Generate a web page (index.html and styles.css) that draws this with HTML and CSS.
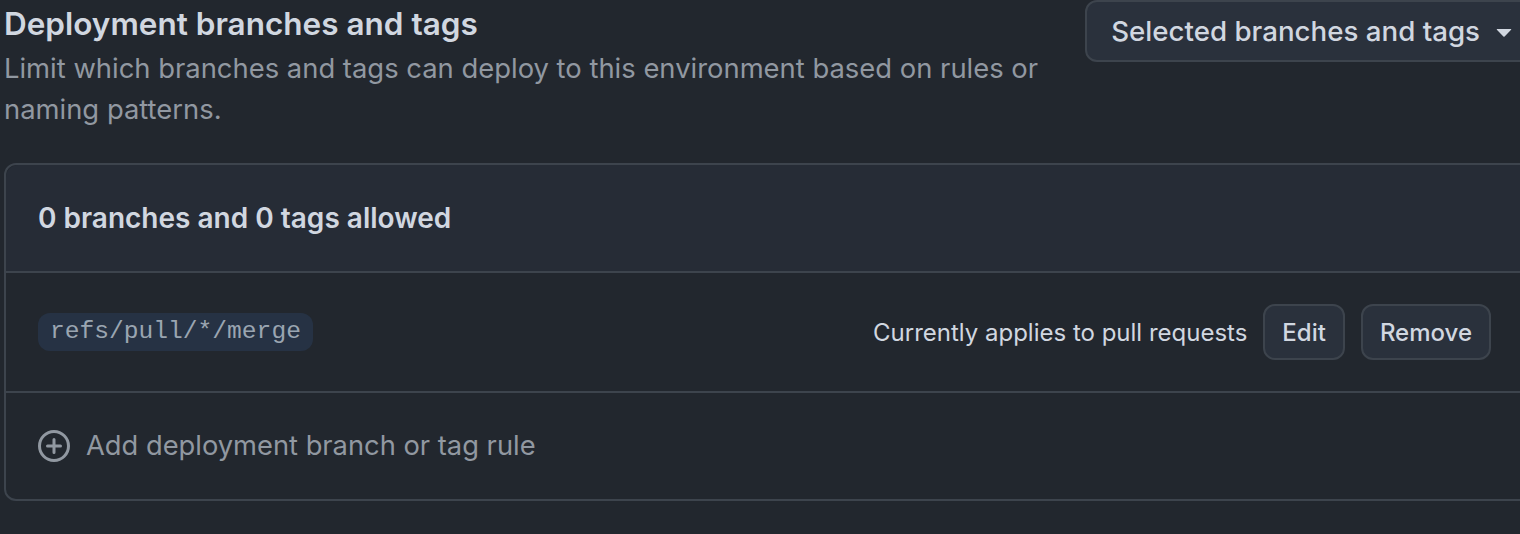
FILE: index.html
```html
<!DOCTYPE html>
<html lang="en">
<head>
<meta charset="utf-8">
<title>Deployment branches and tags</title>
<link rel="stylesheet" href="styles.css">
</head>
<body>
<div class="page">
  <div class="subhead">
    <div class="subhead-text">
      <h2 class="title">Deployment branches and tags</h2>
      <p class="desc">Limit which branches and tags can deploy to this environment based on rules or naming patterns.</p>
    </div>
    <button class="btn btn-select" type="button">
      <span>Selected branches and tags</span>
      <svg class="caret" width="32" height="32" viewBox="0 0 16 16" aria-hidden="true"><path fill="currentColor" d="m4.427 7.427 3.396 3.396a.25.25 0 0 0 .354 0l3.396-3.396A.25.25 0 0 0 11.396 7H4.604a.25.25 0 0 0-.177.427Z"/></svg>
    </button>
  </div>

  <div class="box">
    <div class="box-header">0 branches and 0 tags allowed</div>
    <div class="box-row rule-row">
      <code class="pattern">refs/pull/*/merge</code>
      <div class="rule-actions">
        <span class="rule-note">Currently applies to pull requests</span>
        <button class="btn btn-sm" type="button">Edit</button>
        <button class="btn btn-sm" type="button">Remove</button>
      </div>
    </div>
    <div class="box-row add-row">
      <svg class="plus" width="32" height="32" viewBox="0 0 16 16" aria-hidden="true"><path fill="currentColor" d="M8 0a8 8 0 1 1 0 16A8 8 0 0 1 8 0ZM1.5 8a6.5 6.5 0 1 0 13 0 6.5 6.5 0 0 0-13 0Zm7.25-3.25v2.5h2.5a.75.75 0 0 1 0 1.5h-2.5v2.5a.75.75 0 0 1-1.5 0v-2.5h-2.5a.75.75 0 0 1 0-1.5h2.5v-2.5a.75.75 0 0 1 1.5 0Z"/></svg>
      <span>Add deployment branch or tag rule</span>
    </div>
  </div>
</div>
</body>
</html>
```

FILE: styles.css
```css
html, body {
  margin: 0;
  padding: 0;
  background: #22272e;
  overflow: hidden;
}

body {
  font-family: Inter, "Noto Sans", "Liberation Sans", sans-serif;
  color: #d1d7e0;
}

.page {
  width: 1542px;
  padding-left: 4px;
}

.subhead {
  display: flex;
  justify-content: space-between;
  align-items: flex-start;
  gap: 42px;
}

.subhead-text {
  width: 1060px;
}

.title {
  margin: 0;
  font-size: 31.5px;
  line-height: 47px;
  font-weight: 600;
  color: #d1d7e0;
}

.desc {
  margin: 1px 0 0;
  font-size: 27.4px;
  line-height: 41px;
  color: #9198a1;
}

.btn {
  font-family: inherit;
  color: #d1d7e0;
  background: #2a313c;
  border: 2px solid #3d444d;
  border-radius: 12px;
  font-weight: 500;
  display: flex;
  align-items: center;
  cursor: pointer;
}

.btn-select {
  height: 62px;
  padding: 0 24px;
  gap: 8px;
  font-size: 27.7px;
  flex: none;
}

.caret {
  color: #d1d7e0;
}

.box {
  margin-top: 33px;
  border: 2px solid #3d444d;
  border-radius: 12px;
}

.box-header {
  background: #262c36;
  border-radius: 12px 12px 0 0;
  padding: 32px 32px;
  font-size: 28px;
  line-height: 42px;
  font-weight: 600;
  color: #d1d7e0;
}

.box-row {
  border-top: 2px solid #3d444d;
  padding: 32px 32px;
  display: flex;
  align-items: center;
}

.rule-row {
  justify-content: space-between;
  padding-top: 31px;
  padding-bottom: 31px;
  padding-right: 53px;
}

.pattern {
  font-family: "Liberation Mono", "DejaVu Sans Mono", monospace;
  font-size: 24.6px;
  line-height: 38px;
  padding: 0 12px;
  border-radius: 12px;
  background: #263244;
  color: #9aa5b1;
}

.rule-actions {
  display: flex;
  align-items: center;
  gap: 16px;
}

.rule-note {
  font-size: 24px;
  color: #d1d7e0;
}

.btn-sm {
  height: 56px;
  padding: 0 17px;
  font-size: 24px;
}

.add-row {
  gap: 16px;
  font-size: 27.3px;
  line-height: 42px;
  color: #9198a1;
}

.plus {
  color: #9198a1;
  flex: none;
}
```
